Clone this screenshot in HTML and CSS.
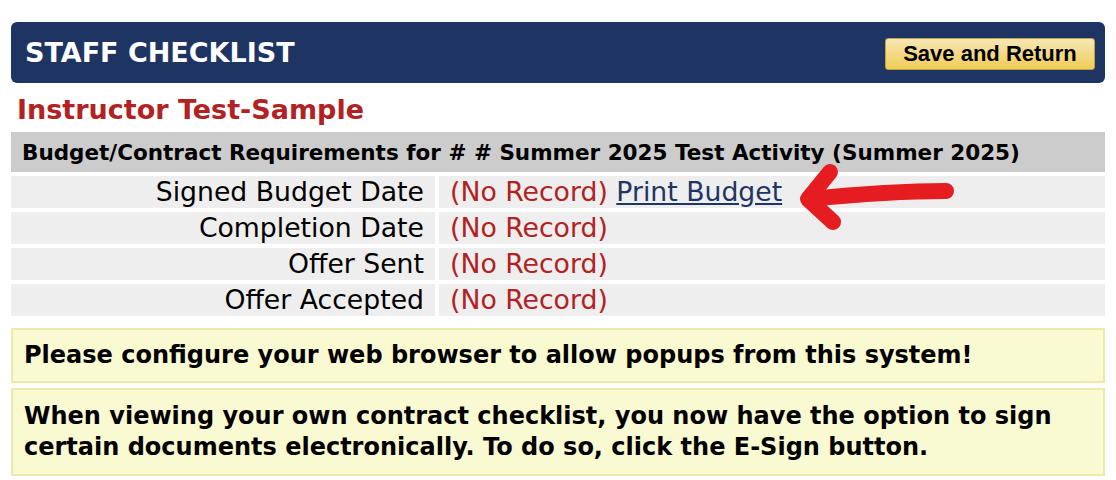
FILE: index.html
```html
<!DOCTYPE html>
<html lang="en">
<head>
    <meta charset="UTF-8">
    <title>Staff Checklist</title>
    <link rel="stylesheet" href="styles.css">
</head>
<body>

    <div class="topbar">
        <h1>STAFF CHECKLIST</h1>
        <button class="save-btn">Save and Return</button>
    </div>

    <h2 class="person">Instructor Test-Sample</h2>

    <table class="reqs">
        <tr>
            <th colspan="2">Budget/Contract Requirements for # # Summer 2025 Test Activity (Summer 2025)</th>
        </tr>
        <tr>
            <td class="label">Signed Budget Date</td>
            <td class="value"><span class="none">(No Record)</span> <a href="#">Print Budget</a></td>
        </tr>
        <tr>
            <td class="label">Completion Date</td>
            <td class="value"><span class="none">(No Record)</span></td>
        </tr>
        <tr>
            <td class="label">Offer Sent</td>
            <td class="value"><span class="none">(No Record)</span></td>
        </tr>
        <tr>
            <td class="label">Offer Accepted</td>
            <td class="value"><span class="none">(No Record)</span></td>
        </tr>
    </table>

    <div class="notice notice-short">Please configure your web browser to allow popups from this system!</div>
    <div class="notice">When viewing your own contract checklist, you now have the option to sign certain documents electronically. To do so, click the E-Sign button.</div>

    <!-- hand drawn pointer -->
    <svg class="arrow" width="1116" height="480" viewBox="0 0 1116 480">
        <path d="M946 191 C905 191 860 194 809 199" />
        <path d="M830 172 L808 199 L833 222" />
    </svg>

</body>
</html>
```

FILE: styles.css
```css
body {
    margin: 0;
    padding: 22px 11px 0;
    font-family: "DejaVu Sans", Verdana, sans-serif;
    background-color: #ffffff;
    color: #000000;
}
.topbar {
    display: flex;
    align-items: center;
    justify-content: space-between;
    height: 61px;
    padding: 0 10px 0 14px;
    background-color: #1e3462;
    border-radius: 6px;
}
.topbar h1 {
    margin: 0;
    color: #ffffff;
    font-size: 27px;
    font-weight: bold;
}
.save-btn {
    height: 32px;
    width: 210px;
    margin-top: 2px;
    padding: 0;
    font-family: "Liberation Sans", Arial, sans-serif;
    font-size: 22px;
    font-weight: bold;
    color: #000000;
    background: linear-gradient(#f6e7b7, #f0cc55);
    border: 1px solid #c4a13f;
    border-radius: 3px;
}
.person {
    margin: 0;
    padding: 10px 0 0 6px;
    height: 35px;
    color: #b22222;
    font-size: 27px;
    font-weight: bold;
    line-height: 33px;
}
.reqs {
    width: calc(100% + 8px);
    margin: 0 -4px;
    border-spacing: 4px;
}
.reqs th {
    height: 40px;
    padding: 0 11px;
    background-color: #cccccc;
    text-align: left;
    font-size: 21.5px;
    font-weight: bold;
}
.reqs td {
    height: 32px;
    padding: 0 11px;
    background-color: #eeeeee;
    font-size: 26.7px;
    line-height: 32px;
}
.reqs .label {
    width: 402px;
    text-align: right;
}
.none {
    color: #b22222;
}
.reqs a {
    color: #1f3563;
}
.notice {
    margin-top: 5px;
    padding: 11px 11px;
    background-color: #fafad2;
    border: 2px solid #eee8aa;
    font-size: 24px;
    font-weight: bold;
    line-height: 31px;
}
.notice-short {
    margin-top: 8px;
    padding: 10px 11px;
}
.arrow {
    position: absolute;
    top: 0;
    left: 0;
    pointer-events: none;
}
.arrow path {
    fill: none;
    stroke: #e51d20;
    stroke-width: 16;
    stroke-linecap: round;
    stroke-linejoin: round;
}
```
